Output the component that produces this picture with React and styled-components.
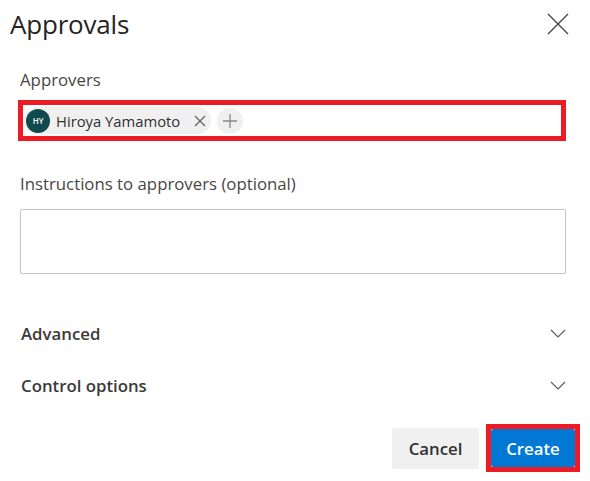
import React from "react";
import styled, { createGlobalStyle } from "styled-components";

const GlobalStyle = createGlobalStyle`
  body {
    margin: 0;
    background: #ffffff;
    font-family: "Open Sans", "Noto Sans", sans-serif;
    color: #323130;
  }
`;

const Panel = styled.div`
  width: 590px;
  height: 481px;
  box-sizing: border-box;
  padding: 4px 10px 0 10px;
  display: flex;
  flex-direction: column;
`;

const Header = styled.div`
  display: flex;
  align-items: center;
  justify-content: space-between;
  height: 40px;
  padding-right: 10px;
`;

const Title = styled.h1`
  margin: 0;
  font-size: 26px;
  font-weight: 400;
  color: #252423;
  letter-spacing: -0.2px;
`;

const CloseButton = styled.button`
  border: none;
  background: none;
  padding: 0;
  width: 24px;
  height: 24px;
  display: flex;
  align-items: center;
  justify-content: center;
  cursor: pointer;
`;

const Body = styled.div`
  padding: 0 14px 0 10px;
  display: flex;
  flex-direction: column;
`;

const Label = styled.div`
  font-size: 16.8px;
  color: #484644;
  margin-top: ${(p) => p.$top || 0}px;
  line-height: 20px;
`;

const Highlight = styled.div`
  margin: 10px 0 0 -2px;
  border: 5px solid #ed1c24;
  height: 31px;
  display: flex;
  align-items: center;
  padding-left: 1px;
  gap: 6px;
`;

const Chip = styled.div`
  display: flex;
  align-items: center;
  height: 27px;
  border-radius: 14px;
  background: #f0f0f0;
  padding: 0 5px 0 2px;
  gap: 6px;
`;

const Avatar = styled.div`
  width: 24px;
  height: 24px;
  border-radius: 50%;
  background: #0f4a4c;
  color: #ffffff;
  font-size: 8px;
  font-weight: 600;
  display: flex;
  align-items: center;
  justify-content: center;
`;

const ChipName = styled.span`
  font-size: 14.8px;
  color: #323130;
  margin-right: 8px;
`;

const RoundButton = styled.button`
  width: 26px;
  height: 26px;
  border-radius: 50%;
  border: none;
  background: ${(p) => (p.$filled ? "#f0f0f0" : "transparent")};
  padding: 0;
  display: flex;
  align-items: center;
  justify-content: center;
`;

const TextArea = styled.textarea`
  margin-top: 15px;
  height: 65px;
  box-sizing: border-box;
  border: 1px solid #c8c6c4;
  border-radius: 2px;
  box-shadow: 0 0 1px rgba(0, 0, 0, 0.15);
  resize: none;
  font-family: inherit;
`;

const Section = styled.div`
  display: flex;
  align-items: center;
  justify-content: space-between;
  height: 24px;
  margin-top: ${(p) => p.$top}px;
  padding-left: 1px;
`;

const SectionTitle = styled.span`
  font-size: 16.8px;
  font-weight: 600;
  color: #3b3a39;
`;

const Footer = styled.div`
  display: flex;
  justify-content: flex-end;
  align-items: center;
  gap: 7px;
  margin-top: 27px;
`;

const Button = styled.button`
  font-family: inherit;
  font-size: 16.8px;
  font-weight: 600;
  border: none;
  border-radius: 2px;
  padding: 0;
  height: ${(p) => (p.$primary ? 38 : 41)}px;
  width: ${(p) => (p.$primary ? 84 : 87)}px;
  background: ${(p) => (p.$primary ? "#0078d4" : "#f0f0f0")};
  color: ${(p) => (p.$primary ? "#ffffff" : "#323130")};
`;

const PrimaryFrame = styled.div`
  border: 5px solid #ed1c24;
  display: flex;
`;

const Chevron = () => (
  <svg width="16" height="9" viewBox="0 0 16 9">
    <path d="M1 1 L8 8 L15 1" fill="none" stroke="#605e5c" strokeWidth="1.2" />
  </svg>
);

export default function App() {
  return (
    <>
      <GlobalStyle />
      <Panel>
        <Header>
          <Title>Approvals</Title>
          <CloseButton aria-label="Close">
            <svg width="22" height="22" viewBox="0 0 22 22">
              <path d="M1 1 L21 21 M21 1 L1 21" stroke="#484644" strokeWidth="1.4" />
            </svg>
          </CloseButton>
        </Header>
        <Body>
          <Label $top={26}>Approvers</Label>
          <Highlight>
            <Chip>
              <Avatar>HY</Avatar>
              <ChipName>Hiroya Yamamoto</ChipName>
              <svg width="12" height="12" viewBox="0 0 12 12">
                <path d="M1 1 L11 11 M11 1 L1 11" stroke="#605e5c" strokeWidth="1.2" />
              </svg>
            </Chip>
            <RoundButton $filled aria-label="Add">
              <svg width="16" height="16" viewBox="0 0 16 16">
                <path d="M8 1 V15 M1 8 H15" stroke="#8a8886" strokeWidth="1.3" />
              </svg>
            </RoundButton>
          </Highlight>
          <Label $top={33}>Instructions to approvers (optional)</Label>
          <TextArea />
          <Section $top={47}>
            <SectionTitle>Advanced</SectionTitle>
            <Chevron />
          </Section>
          <Section $top={28}>
            <SectionTitle>Control options</SectionTitle>
            <Chevron />
          </Section>
        </Body>
        <Footer>
          <Button>Cancel</Button>
          <PrimaryFrame>
            <Button $primary>Create</Button>
          </PrimaryFrame>
        </Footer>
      </Panel>
    </>
  );
}
